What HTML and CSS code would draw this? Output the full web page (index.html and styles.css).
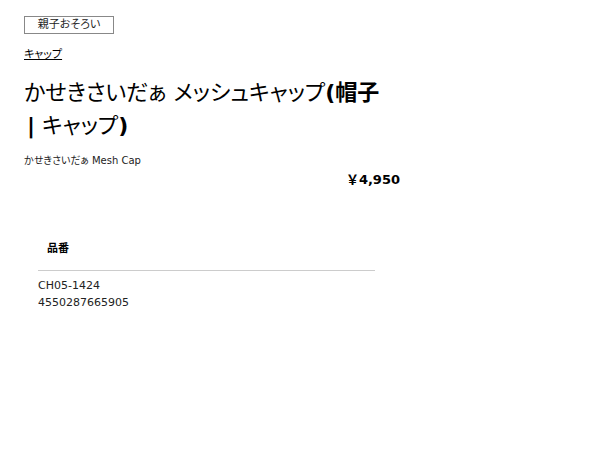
FILE: index.html
```html
<!DOCTYPE html>
<html lang="ja">
<head>
<meta charset="utf-8">
<link rel="stylesheet" href="styles.css">
</head>
<body>
<div class="page">
  <div class="tag">親子おそろい</div>
  <a class="cat" href="#">キャップ</a>
  <h1 class="title">かせきさいだぁ メッシュキャップ<b>(帽子</b> <b class="bar">|</b> キャップ<b>)</b></h1>
  <p class="sub">かせきさいだぁ Mesh Cap</p>
  <div class="price">￥4,950</div>
  <div class="spec">
    <div class="spec-head">品番</div>
    <div class="spec-body">
      <div>CH05-1424</div>
      <div>4550287665905</div>
    </div>
  </div>
</div>
</body>
</html>
```
FILE: styles.css
```css
html, body {
  margin: 0;
  padding: 0;
  background: #fff;
}
body {
  font-family: "DejaVu Sans", "Noto Sans CJK JP", sans-serif;
  font-feature-settings: "palt";
  color: #000;
}
.page {
  width: 376px;
  padding: 16px 24px;
  display: flex;
  flex-direction: column;
  align-items: flex-start;
}
.tag {
  width: 88px;
  height: 16px;
  border: 1px solid #888;
  font-size: 11px;
  line-height: 16px;
  text-align: center;
  color: #222;
}
.cat {
  margin-top: 13px;
  font-size: 11px;
  line-height: 16px;
  color: #000;
  text-decoration: underline;
}
.title {
  margin: 13px 0 0;
  max-width: 362px;
  font-size: 22px;
  line-height: 33px;
  font-weight: normal;
  color: #000;
}
.title b {
  font-weight: bold;
}
.title .bar {
  padding-left: 3px;
}
.sub {
  margin: 12px 0 0;
  font-size: 10px;
  line-height: 14px;
  color: #222;
}
.price {
  align-self: stretch;
  text-align: right;
  font-size: 13px;
  font-weight: bold;
  line-height: 18px;
  margin-top: 3px;
  font-feature-settings: normal;
}
.spec {
  margin: 52px 0 0 14px;
  width: 337px;
}
.spec-head {
  font-size: 11px;
  font-weight: bold;
  padding: 0 0 13px 9px;
  line-height: 16px;
  border-bottom: 1px solid #ccc;
}
.spec-body {
  padding-top: 6px;
  font-size: 11px;
  line-height: 17px;
  color: #222;
}
```
